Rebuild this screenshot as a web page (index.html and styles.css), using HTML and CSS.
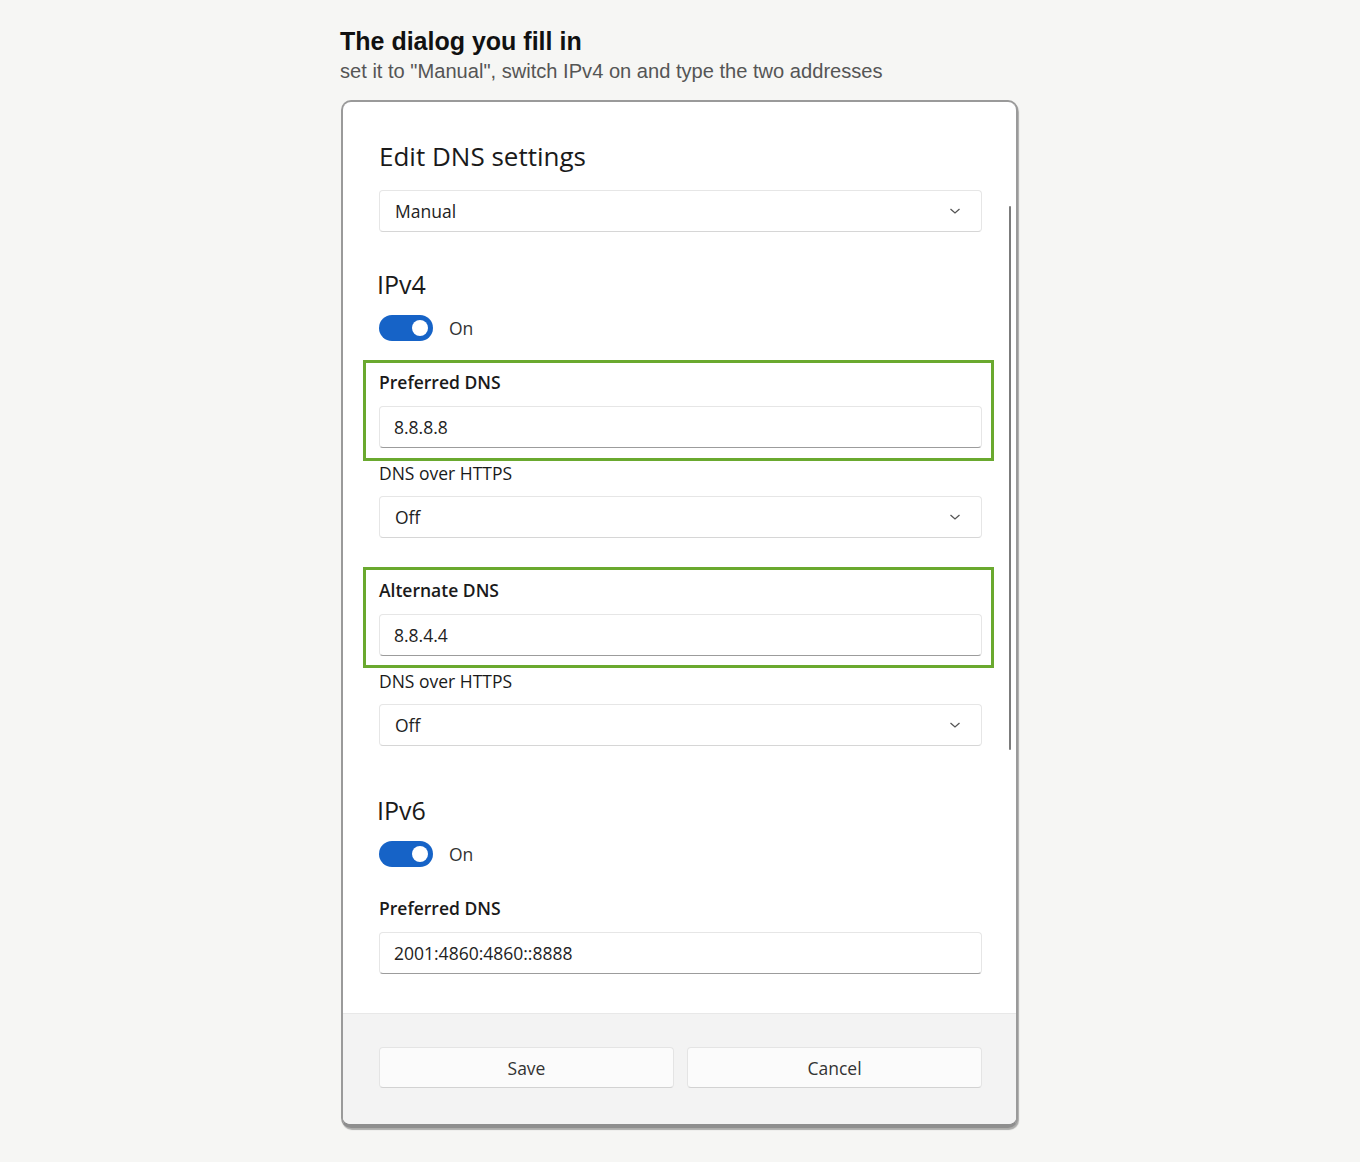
FILE: index.html
```html
<!DOCTYPE html>
<html>
<head>
<meta charset="utf-8">
<link rel="stylesheet" href="styles.css">
</head>
<body>
<div class="page">
  <h1 class="title">The dialog you fill in</h1>
  <p class="subtitle">set it to "Manual", switch IPv4 on and type the two addresses</p>
  <div class="frame">
    <div class="scrollbar"></div>
    <div class="dialog-body">
      <div class="dlg-title">Edit DNS settings</div>
      <div class="select first">
        <span>Manual</span>
        <svg class="chev" width="12" height="8" viewBox="0 0 12 8"><path d="M1.5 2 L6 6 L10.5 2" fill="none" stroke="#555" stroke-width="1.3"/></svg>
      </div>

      <div class="section-head">IPv4</div>
      <div class="toggle-row">
        <span class="toggle"><span class="knob"></span></span>
        <span class="toggle-label">On</span>
      </div>

      <div class="hl hl-1">
        <div class="field-label">Preferred DNS</div>
        <div class="input">8.8.8.8</div>
      </div>
      <div class="sub-label">DNS over HTTPS</div>
      <div class="select">
        <span>Off</span>
        <svg class="chev" width="12" height="8" viewBox="0 0 12 8"><path d="M1.5 2 L6 6 L10.5 2" fill="none" stroke="#555" stroke-width="1.3"/></svg>
      </div>

      <div class="hl hl-2">
        <div class="field-label">Alternate DNS</div>
        <div class="input">8.8.4.4</div>
      </div>
      <div class="sub-label">DNS over HTTPS</div>
      <div class="select">
        <span>Off</span>
        <svg class="chev" width="12" height="8" viewBox="0 0 12 8"><path d="M1.5 2 L6 6 L10.5 2" fill="none" stroke="#555" stroke-width="1.3"/></svg>
      </div>

      <div class="section-head v6">IPv6</div>
      <div class="toggle-row">
        <span class="toggle"><span class="knob"></span></span>
        <span class="toggle-label">On</span>
      </div>
      <div class="field-label plain">Preferred DNS</div>
      <div class="input">2001:4860:4860::8888</div>
    </div>
    <div class="dialog-footer">
      <div class="btn">Save</div>
      <div class="btn">Cancel</div>
    </div>
  </div>
</div>
</body>
</html>
```
FILE: styles.css
```css
html, body {
  margin: 0;
  padding: 0;
  background: #f6f6f4;
}
.page {
  padding: 27px 0 40px 340px;
  font-family: "Liberation Sans", Arial, sans-serif;
}
.title {
  margin: 0;
  font-size: 25px;
  line-height: 28px;
  font-weight: bold;
  color: #111;
}
.subtitle {
  margin: 4px 0 0 0;
  font-size: 20.1px;
  line-height: 24px;
  color: #555;
}
.frame {
  position: relative;
  margin-top: 17px;
  margin-left: 1px;
  width: 673px;
  border: 2px solid #9a9a9a;
  border-bottom: 4px solid #8e8e8e;
  border-radius: 10px;
  overflow: hidden;
  background: #fff;
  box-shadow: 1px 2px 1px rgba(0,0,0,0.3);
  font-family: "Open Sans", "Noto Sans", sans-serif;
  color: #1b1b1b;
}
.scrollbar {
  position: absolute;
  left: 666px;
  top: 104px;
  width: 2px;
  height: 544px;
  background: #7c7c7c;
  border-radius: 1px;
}
.dialog-body {
  padding: 37px 34px 39px 36px;
}
.dlg-title {
  font-size: 26px;
  line-height: 34px;
  color: #1a1a1a;
}
.select, .input {
  box-sizing: border-box;
  height: 42px;
  border: 1px solid #e6e6e6;
  border-radius: 4px;
  background: #fff;
  display: flex;
  align-items: center;
  font-size: 17.5px;
  color: #222;
}
.select {
  justify-content: space-between;
  padding: 0 20px 0 15px;
  margin-top: 12px;
  border-bottom-color: #d6d6d6;
}
.select.first {
  margin-top: 17px;
}
.input {
  padding: 0 14px;
  border-bottom: 1px solid #9c9c9c;
}
.chev {
  display: block;
}
.section-head {
  margin-top: 36px;
  font-size: 25px;
  line-height: 32px;
  color: #1a1a1a;
  margin-left: -2px;
}
.section-head.v6 {
  margin-top: 48px;
}
.toggle-row {
  display: flex;
  align-items: center;
  margin-top: 15px;
  height: 26px;
}
.toggle {
  box-sizing: border-box;
  width: 54px;
  height: 26px;
  border-radius: 13px;
  background: #1663c7;
  display: flex;
  align-items: center;
  justify-content: flex-end;
  padding-right: 5px;
}
.knob {
  width: 16px;
  height: 16px;
  border-radius: 50%;
  background: #fff;
}
.toggle-label {
  margin-left: 16px;
  font-size: 17.5px;
  color: #333;
}
.hl {
  margin: 19px -12px 0 -16px;
  padding: 8px 9px 10px 13px;
  border: 3px solid #6aa92f;
}
.hl-2 {
  margin-top: 29px;
  padding-top: 9px;
  padding-bottom: 9px;
}
.field-label {
  font-size: 17.5px;
  line-height: 22px;
  font-weight: 600;
  color: #1a1a1a;
  margin-bottom: 13px;
}
.field-label.plain {
  margin-top: 30px;
}
.sub-label {
  margin-top: 1px;
  font-size: 17.5px;
  line-height: 22px;
  color: #1a1a1a;
}
.hl-2 + .sub-label {
  margin-top: 2px;
}
.dialog-footer {
  background: #f3f3f3;
  border-top: 1px solid #e8e8e8;
  padding: 33px 34px 36px 36px;
  display: flex;
  gap: 13px;
}
.btn {
  box-sizing: border-box;
  flex: 1;
  height: 41px;
  border: 1px solid #e4e4e4;
  border-bottom-color: #d2d2d2;
  border-radius: 4px;
  background: #fbfbfb;
  display: flex;
  align-items: center;
  justify-content: center;
  font-size: 17.5px;
  color: #333;
}
```
